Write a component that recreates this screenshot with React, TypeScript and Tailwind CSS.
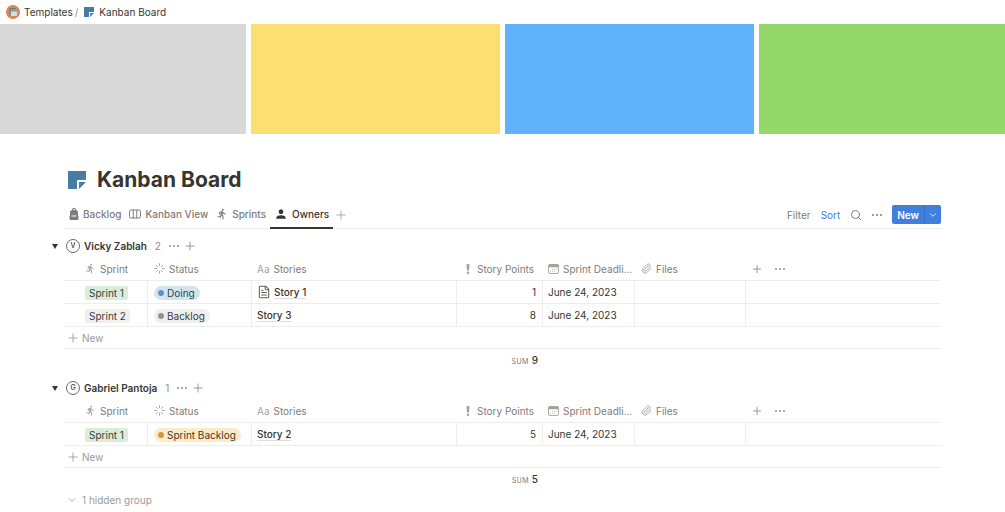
import type { ReactNode } from "react";
import { ChevronDown, FileText, Paperclip, Plus, Search } from "lucide-react";
import { MdDirectionsRun, MdPerson } from "react-icons/md";

type Status = "Doing" | "Backlog" | "Sprint Backlog";

type Story = {
  name: string;
  sprint: "Sprint 1" | "Sprint 2";
  status: Status;
  points: number;
  deadline: string;
  hasPage?: boolean;
};

const groups: { owner: string; stories: Story[] }[] = [
  {
    owner: "Vicky Zablah",
    stories: [
      { name: "Story 1", sprint: "Sprint 1", status: "Doing", points: 1, deadline: "June 24, 2023", hasPage: true },
      { name: "Story 3", sprint: "Sprint 2", status: "Backlog", points: 8, deadline: "June 24, 2023" },
    ],
  },
  {
    owner: "Gabriel Pantoja",
    stories: [
      { name: "Story 2", sprint: "Sprint 1", status: "Sprint Backlog", points: 5, deadline: "June 24, 2023" },
    ],
  },
];

const sprintStyles = {
  "Sprint 1": "bg-[#dbecdb] text-[#2b4637]",
  "Sprint 2": "bg-[#f0f0ef] text-[#3c3b37]",
};

const statusStyles: Record<Status, { pill: string; dot: string }> = {
  Doing: { pill: "bg-[#d3e4ef] text-[#2b4459]", dot: "bg-[#5f93bf]" },
  Backlog: { pill: "bg-[#efefee] text-[#3c3b37]", dot: "bg-[#91918e]" },
  "Sprint Backlog": { pill: "bg-[#fbebc8] text-[#4a3622]", dot: "bg-[#c99a43]" },
};

function NoteIcon({ className }: { className: string }) {
  return (
    <svg viewBox="0 0 18 18" className={className} aria-hidden="true">
      <path d="M0 0h18v9H9v9H0z" fill="#487ca5" />
      <path d="M11 11h7l-7 7z" fill="#487ca5" />
    </svg>
  );
}

function WorkspaceIcon() {
  return (
    <svg viewBox="0 0 28 28" className="size-3.5" aria-hidden="true">
      <circle cx="14" cy="14" r="14" fill="#e08358" />
      <path d="M5 10l4-4h10l2 4z" fill="#8a6a5c" />
      <rect x="6" y="9" width="4" height="12" fill="#7b8f91" />
      <rect x="10" y="9" width="12" height="13" rx="1" fill="#cfe3dc" />
      <rect x="10" y="9" width="12" height="4" fill="#4fb3a0" />
    </svg>
  );
}

function BackpackIcon() {
  return (
    <svg viewBox="0 0 20 24" className="h-3 w-2.5" fill="currentColor" aria-hidden="true">
      <path d="M6 7V3a3 3 0 0 1 3-3h2a3 3 0 0 1 3 3v4h-2V3a1 1 0 0 0-1-1H9a1 1 0 0 0-1 1v4z" />
      <path
        fillRule="evenodd"
        d="M7 4h6a5 5 0 0 1 5 5v6l1 1v5a3 3 0 0 1-3 3H4a3 3 0 0 1-3-3v-5l1-1V9a5 5 0 0 1 5-5zM5 15v2h10v-2z"
      />
    </svg>
  );
}

function BoardIcon() {
  return (
    <svg viewBox="0 0 24 20" className="h-2.5 w-3" fill="none" stroke="currentColor" strokeWidth="2" aria-hidden="true">
      <rect x="1" y="2" width="22" height="16" rx="3" />
      <path d="M8.5 2v16M15.5 2v16" />
    </svg>
  );
}

function ExclamationIcon() {
  return (
    <svg viewBox="0 0 20 20" className="size-2.5 shrink-0" fill="currentColor" aria-hidden="true">
      <path d="M7 2a2 2 0 0 1 2-2h2a2 2 0 0 1 2 2l-1 11H8z" />
      <circle cx="10" cy="17.5" r="2.5" />
    </svg>
  );
}

function DateIcon() {
  return (
    <svg viewBox="0 0 22 20" className="h-2.5 w-[11px] shrink-0" fill="none" stroke="currentColor" aria-hidden="true">
      <rect x="1" y="1" width="20" height="18" rx="3" strokeWidth="1.8" />
      <path d="M1 4a3 3 0 0 1 3-3h14a3 3 0 0 1 3 3v2H1z" fill="currentColor" />
      <path d="M8 10.5h10M4 14.5h10" strokeWidth="2" strokeDasharray="2 2" strokeOpacity="0.7" />
    </svg>
  );
}

function StatusIcon() {
  return (
    <svg
      viewBox="0 0 24 24"
      className="size-[11px] shrink-0"
      fill="none"
      stroke="currentColor"
      strokeWidth="2"
      strokeLinecap="round"
      aria-hidden="true"
    >
      <path d="M12 1.5v4.5M12 18v4.5M1.5 12h4.5M18 12h4.5M4.6 4.6l3.1 3.1M16.3 16.3l3.1 3.1M4.6 19.4l3.1-3.1M16.3 7.7l3.1-3.1" />
    </svg>
  );
}

function DotsIcon() {
  return (
    <svg viewBox="0 0 20 4" className="h-0.5 w-2.5" fill="currentColor" aria-hidden="true">
      <circle cx="2" cy="2" r="2" />
      <circle cx="10" cy="2" r="2" />
      <circle cx="18" cy="2" r="2" />
    </svg>
  );
}

function Tab({ icon, label, active }: { icon: ReactNode; label: string; active?: boolean }) {
  return (
    <button
      role="tab"
      aria-selected={!!active}
      className={
        active
          ? "flex h-full items-center gap-1 border-b-2 border-[#37352f] px-1 text-[#37352f]"
          : "flex h-full items-center gap-1 border-b-2 border-transparent px-1"
      }
    >
      {icon}
      {label}
    </button>
  );
}

function HeaderCell({ icon, label, className = "pl-[5px]" }: { icon: ReactNode; label: string; className?: string }) {
  return (
    <th scope="col" className={`h-6 border-b border-[#ededec] p-0 font-normal ${className}`}>
      <div className="flex items-center gap-1 whitespace-nowrap">
        <span className="flex shrink-0 text-[#a3a29f]">{icon}</span>
        {label}
      </div>
    </th>
  );
}

function StoryRow({ story }: { story: Story }) {
  const cell = "h-[23px] border-r border-b border-[#ededec] p-0 leading-none";
  const status = statusStyles[story.status];

  return (
    <tr>
      <td className={`${cell} pt-0.5 pl-[21px]`}>
        <div className="flex">
          <span className={`flex h-3.5 items-center rounded-xs px-1 ${sprintStyles[story.sprint]}`}>
            {story.sprint}
          </span>
        </div>
      </td>
      <td className={`${cell} pt-0.5 pl-1.5`}>
        <div className="flex">
          <span className={`flex h-3.5 items-center gap-[3px] rounded-full pr-[5px] pl-1 ${status.pill}`}>
            <span className={`size-1.5 rounded-full ${status.dot}`} />
            {story.status}
          </span>
        </div>
      </td>
      <td className={`${cell} pl-[5px]`}>
        <div className="flex items-center gap-[3px] font-medium">
          {story.hasPage && <FileText className="size-3.5 text-[#5f5e5a]" strokeWidth={1.8} />}
          <a href="#" className="border-b border-[#dededc] leading-3">
            {story.name}
          </a>
        </div>
      </td>
      <td className={`${cell} pr-1.5 text-right`}>{story.points}</td>
      <td className={`${cell} pl-[5px]`}>{story.deadline}</td>
      <td className={cell} />
      <td className="border-b border-[#ededec] p-0" />
    </tr>
  );
}

function OwnerGroup({ owner, stories }: { owner: string; stories: Story[] }) {
  const total = stories.reduce((sum, story) => sum + story.points, 0);

  return (
    <section>
      <div className="-ml-3 flex h-[22px] items-center text-[#8f8e8b]">
        <button aria-label={`Collapse ${owner}`} className="mr-2 text-[#37352f]">
          <svg viewBox="0 0 12 10" className="h-[5px] w-1.5" fill="currentColor" aria-hidden="true">
            <path d="M0 0h12L6 10z" />
          </svg>
        </button>
        <span className="mr-1 flex size-3.5 items-center justify-center rounded-full border border-[#6b6a66] text-[7px] font-medium text-[#37352f]">
          {owner[0]}
        </span>
        <h2 className="font-semibold text-[#37352f]">{owner}</h2>
        <span className="mr-2 ml-2">{stories.length}</span>
        <button aria-label="Group options" className="mr-1">
          <DotsIcon />
        </button>
        <button aria-label="Add to group">
          <Plus className="size-3.5" strokeWidth={1.5} />
        </button>
      </div>

      <table className="w-full table-fixed border-separate border-spacing-0 text-left">
        <colgroup>
          <col className="w-[84px]" />
          <col className="w-[104px]" />
          <col className="w-[205px]" />
          <col className="w-[86px]" />
          <col className="w-[92px]" />
          <col className="w-[111px]" />
          <col />
        </colgroup>
        <thead className="text-[#7d7c78]">
          <tr>
            <HeaderCell icon={<MdDirectionsRun className="size-[11px]" />} label="Sprint" className="pl-[21px]" />
            <HeaderCell icon={<StatusIcon />} label="Status" className="pl-1.5" />
            <HeaderCell icon="Aa" label="Stories" />
            <HeaderCell icon={<ExclamationIcon />} label="Story Points" className="pl-1.5" />
            <HeaderCell icon={<DateIcon />} label="Sprint Deadli..." />
            <HeaderCell icon={<Paperclip className="size-[11px]" />} label="Files" className="pl-1.5" />
            <th className="border-b border-[#ededec] p-0 pl-[5px] text-[#8f8e8b]">
              <div className="flex items-center gap-3">
                <button aria-label="Add property">
                  <Plus className="size-3" strokeWidth={1.8} />
                </button>
                <button aria-label="Property options">
                  <DotsIcon />
                </button>
              </div>
            </th>
          </tr>
        </thead>
        <tbody>
          {stories.map((story) => (
            <StoryRow key={story.name} story={story} />
          ))}
          <tr>
            <td colSpan={7} className="h-[22px] border-b border-[#ededec] p-0 pl-0.5">
              <button className="flex items-center gap-0.5 text-[#9b9a97]">
                <Plus className="size-3.5" strokeWidth={1.5} />
                New
              </button>
            </td>
          </tr>
        </tbody>
        <tfoot>
          <tr>
            <td colSpan={4} className="h-6 p-0 pr-[5px] text-right font-medium">
              <span className="mr-[3px] text-[7px] font-normal tracking-wider text-[#7d7c78]">SUM</span>
              {total}
            </td>
            <td colSpan={3} />
          </tr>
        </tfoot>
      </table>
    </section>
  );
}

export default function App() {
  return (
    <div className="bg-white font-['Inter',sans-serif] text-[10px] leading-[14px] text-[#37352f]">
      <nav aria-label="Breadcrumb" className="flex h-6 items-center px-1.5 pb-px">
        <a href="#" className="flex items-center gap-1">
          <WorkspaceIcon />
          Templates
        </a>
        <span className="mr-1.5 ml-0.5 text-[#8f8e8b]">/</span>
        <a href="#" className="flex items-center gap-[5px]">
          <NoteIcon className="size-2.5" />
          Kanban Board
        </a>
      </nav>

      <div className="flex h-[110px] gap-[5px]">
        <div className="flex-[246] bg-[#d8d8d8]" />
        <div className="flex-[249] bg-[#fbdf72]" />
        <div className="flex-[249] bg-[#60b2fb]" />
        <div className="flex-[246] bg-[#95d86a]" />
      </div>

      <main className="px-16 pt-8">
        <h1 className="flex h-7 items-center gap-[11px] pl-1 text-[21px] font-bold">
          <NoteIcon className="size-[18px]" />
          Kanban Board
        </h1>

        <div className="mt-[7px] mb-1.5 flex h-7 items-stretch justify-between border-b border-[#ededec] font-medium text-[#7d7c78]">
          <div role="tablist" className="-mb-px flex items-center pl-px">
            <Tab icon={<BackpackIcon />} label="Backlog" />
            <Tab icon={<BoardIcon />} label="Kanban View" />
            <Tab icon={<MdDirectionsRun className="size-3" />} label="Sprints" />
            <Tab icon={<MdPerson className="size-3.5" />} label="Owners" active />
            <button aria-label="Add view" className="ml-px text-[#a3a29f]">
              <Plus className="size-3.5" strokeWidth={1.5} />
            </button>
          </div>

          <div className="flex items-center gap-2.5">
            <button className="font-normal">Filter</button>
            <button className="font-normal text-[#4080e6]">Sort</button>
            <button aria-label="Search">
              <Search className="size-3" />
            </button>
            <button aria-label="View options">
              <DotsIcon />
            </button>
            <div className="flex h-[19px] items-center overflow-hidden rounded-xs bg-[#407fdc] text-white">
              <button className="h-full border-r border-[#3870c6] px-[5px] font-semibold">New</button>
              <button aria-label="New from template" className="px-[3px]">
                <ChevronDown className="size-2.5" />
              </button>
            </div>
          </div>
        </div>

        <div className="flex flex-col gap-1">
          {groups.map((group) => (
            <OwnerGroup key={group.owner} {...group} />
          ))}
        </div>

        <button className="flex h-4 items-center gap-1 pl-0.5 text-[#9b9a97]">
          <ChevronDown className="size-3" strokeWidth={1.5} />1 hidden group
        </button>
      </main>
    </div>
  );
}
